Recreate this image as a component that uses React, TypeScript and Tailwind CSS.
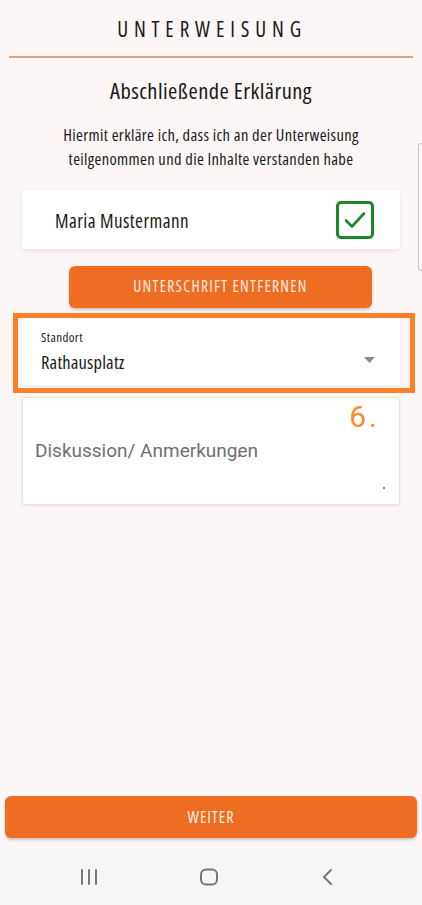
import React from "react";

const cond = { fontFamily: '"Open Sans", "DejaVu Sans Condensed", sans-serif', fontStretch: "75%" } as React.CSSProperties;
const roboto = { fontFamily: "Roboto, sans-serif", fontStretch: "100%" } as React.CSSProperties;

export default function App() {
  return (
    <div className="relative w-[422px] h-[905px] bg-[#fcf7f6] flex flex-col overflow-hidden" style={cond}>
      {/* scrollbar hint */}
      <div className="absolute right-0 top-[143px] w-[4px] h-[128px] border-l border-t border-b border-[#c8c8c8] rounded-l-[3px]" />
      <div className="pt-[14px] flex flex-col items-center">
        <h1 className="text-[21px] leading-[30px] tracking-[0.28em] text-[#1a1a1a] font-normal pl-[0.1em]">UNTERWEISUNG</h1>
      </div>
      <div className="mx-[9px] mt-[12px] h-[2px] bg-[#d9a582]" />
      <h2 className="mt-[19px] text-center text-[22.5px] leading-[28px] tracking-[0.02em] text-[#1a1a1a]">Abschließende Erklärung</h2>
      <p className="mt-[18px] text-center text-[16.5px] leading-[24px] tracking-[0.021em] text-[#1a1a1a]">
        Hiermit erkläre ich, dass ich an der Unterweisung<br />teilgenommen und die Inhalte verstanden habe
      </p>
      <div className="mx-[22px] mt-[19px] h-[59px] bg-white rounded-[3px] shadow-[0_2px_5px_rgba(0,0,0,0.08)] flex items-center justify-between pl-[33px] pr-[26px]">
        <span className="text-[19px] mt-[3px] tracking-[0.024em] text-[#1a1a1a]">Maria Mustermann</span>
        <div className="w-[38px] h-[38px] border-[3px] border-[#1b8a26] rounded-[5px] flex items-center justify-center">
          <svg width="24" height="20" viewBox="0 0 24 20" fill="none">
            <path d="M3 10.5 L9 16.5 L21 3.5" stroke="#1b8a26" strokeWidth="2.6" strokeLinecap="round" strokeLinejoin="round" />
          </svg>
        </div>
      </div>
      <div className="flex mt-[17px] pl-[69px]">
        <button className="w-[303px] h-[42px] bg-[#ef6c23] rounded-[6px] shadow-[0_2px_3px_rgba(0,0,0,0.2)] text-[#fdeee4] text-[15.5px] tracking-[0.085em]">UNTERSCHRIFT ENTFERNEN</button>
      </div>
      <div className="relative mx-[22px] mt-[8px] h-[69px]">
        <div className="h-full bg-white rounded-[3px] shadow-[0_1px_3px_rgba(0,0,0,0.08)] flex items-start justify-between pl-[19px] pr-[25px] pt-[14px]">
          <div className="flex flex-col">
            <span className="text-[13px] leading-[14px] tracking-[0.03em] text-[#222]">Standort</span>
            <span className="text-[18.5px] leading-[24px] mt-[6px] tracking-[0.01em] text-[#1a1a1a]">Rathausplatz</span>
          </div>
          <svg width="11" height="6" viewBox="0 0 11 6" className="mt-[27px]"><path d="M0 0 L11 0 L5.5 6 Z" fill="#8a8a8a" /></svg>
        </div>
        <div className="absolute left-[-9px] right-[-15px] top-[-3px] bottom-[-8px] border-[5px] border-[#ff7f27] pointer-events-none" />
      </div>
      <div className="relative mx-[22px] mt-[12px] h-[108px] bg-white rounded-[3px] border border-[#e6e3e2] shadow-[0_1px_3px_rgba(0,0,0,0.08)] pl-[12px] pt-[41px]">
        <span className="absolute right-[19px] top-[1px] text-[30px] leading-[36px] tracking-[3px] text-[#ff8a2a]" style={roboto}>6.</span>
        <span className="text-[19px] leading-[24px] text-[#6f6f6f]" style={roboto}>Diskussion/ Anmerkungen</span>
        <span className="absolute left-[215px] top-[57px] w-[2px] h-[2px] bg-[#e03030] rounded-full" />
        <span className="absolute right-[14px] bottom-[15px] w-[2px] h-[2px] bg-[#555] rounded-full" />
      </div>
      <div className="flex-1" />
      <div className="px-[5px] pb-[11px]">
        <button className="w-full h-[42px] bg-[#ef6c23] rounded-[6px] shadow-[0_2px_3px_rgba(0,0,0,0.2)] text-[#fdeee4] text-[16px] tracking-[0.06em]">WEITER</button>
      </div>
      <div className="h-[56px] bg-[#f6f6f6] flex items-center pl-[80px] gap-[101px]">
        <svg width="18" height="18" viewBox="0 0 18 18"><g stroke="#777" strokeWidth="2" strokeLinecap="round"><path d="M2 2 V16" /><path d="M9 2 V16" /><path d="M16 2 V16" /></g></svg>
        <svg width="20" height="18" viewBox="0 0 20 18"><rect x="2" y="1.5" width="16" height="15" rx="5" fill="none" stroke="#777" strokeWidth="2" /></svg>
        <svg width="14" height="18" viewBox="0 0 14 18"><path d="M11 2 L4 9 L11 16" fill="none" stroke="#777" strokeWidth="2" strokeLinecap="round" strokeLinejoin="round" /></svg>
      </div>
    </div>
  );
}
